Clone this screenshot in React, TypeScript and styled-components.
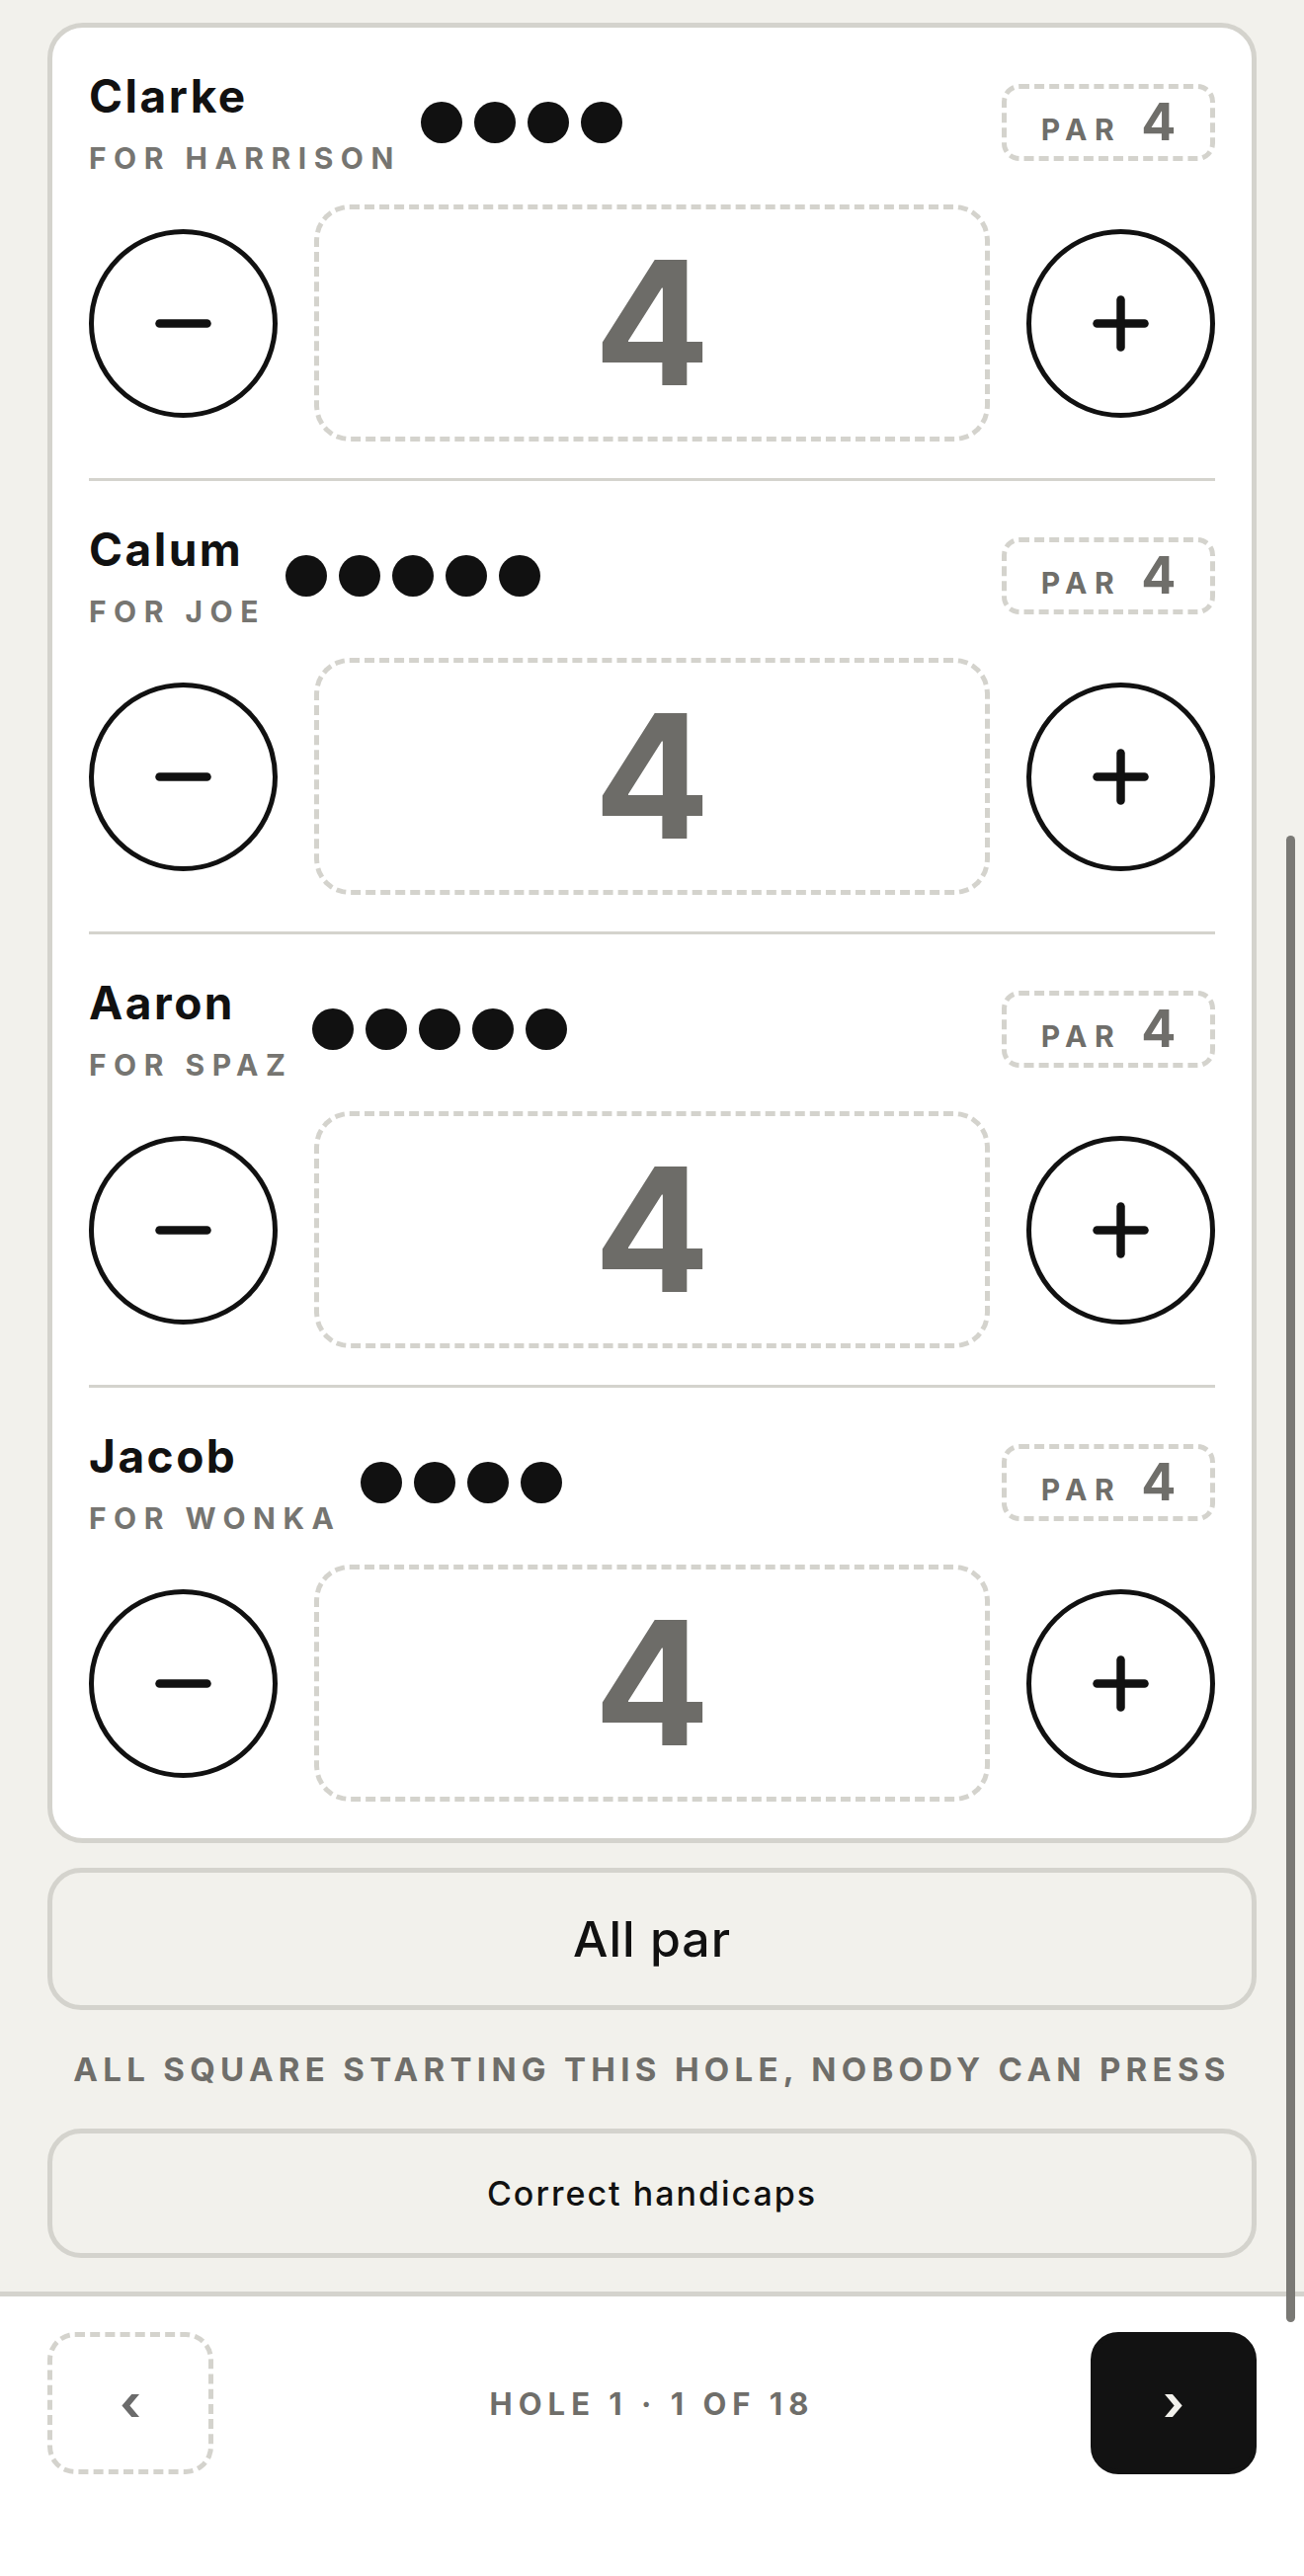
import React from "react";
import styled, { createGlobalStyle } from "styled-components";

const GlobalStyle = createGlobalStyle`
  html, body {
    margin: 0;
    padding: 0;
    background: #f2f1ec;
  }
  body {
    font-family: Inter, "Liberation Sans", sans-serif;
    -webkit-font-smoothing: antialiased;
  }
  * { box-sizing: border-box; }
`;

const Page = styled.div`
  position: relative;
  width: 1320px;
  min-height: 2608px;
  display: flex;
  flex-direction: column;
  background: #f2f1ec;
  overflow: hidden;
`;

const Main = styled.main`
  padding: 23px 48px 34px;
  display: flex;
  flex-direction: column;
`;

const Card = styled.section`
  background: #ffffff;
  border: 5px solid #d4d3cd;
  border-radius: 36px;
  padding: 0 37px;
`;

const Player = styled.div`
  display: flex;
  flex-direction: column;
  gap: 29px;
  padding: 42px 0 37px;
  border-bottom: 3px solid #d4d3cd;
  &:last-child {
    border-bottom: none;
  }
`;

const Header = styled.div`
  display: flex;
  align-items: center;
  justify-content: space-between;
`;

const Identity = styled.div`
  display: flex;
  align-items: center;
  gap: 20px;
`;

const NameBlock = styled.div`
  display: flex;
  flex-direction: column;
  gap: 18px;
`;

const Name = styled.div`
  font-size: 46px;
  line-height: 54px;
  font-weight: 700;
  color: #111111;
  letter-spacing: 2.5px;
`;

const ForLabel = styled.div`
  font-size: 30px;
  line-height: 36px;
  font-weight: 700;
  letter-spacing: 7.5px;
  color: #767571;
  text-transform: uppercase;
`;

const Dots = styled.div`
  display: flex;
  gap: 12px;
`;

const Dot = styled.span`
  width: 42px;
  height: 42px;
  border-radius: 50%;
  background: #111111;
`;

const ParBadge = styled.div`
  width: 216px;
  height: 78px;
  border: 5px dashed #d4d3cd;
  border-radius: 18px;
  line-height: 68px;
  text-align: center;
  white-space: nowrap;
  color: #6f6e6a;
  font-weight: 700;
`;

const ParLabel = styled.span`
  font-size: 30px;
  letter-spacing: 7.5px;
  margin-right: 20px;
`;

const ParValue = styled.span`
  font-size: 52px;
`;

const Controls = styled.div`
  display: flex;
  align-items: center;
  gap: 37px;
`;

const RoundButton = styled.button`
  flex: none;
  width: 191px;
  height: 191px;
  border-radius: 50%;
  border: 5px solid #111111;
  background: #ffffff;
  padding: 0;
  display: flex;
  align-items: center;
  justify-content: center;
`;

const ScoreBox = styled.div`
  flex: 1;
  height: 240px;
  border: 5px dashed #d4d3cd;
  border-radius: 36px;
  display: flex;
  align-items: center;
  justify-content: center;
  font-size: 174px;
  line-height: 1;
  font-weight: 700;
  color: #6d6c68;
`;

const WideButton = styled.button<{ $size: "lg" | "md" }>`
  width: 100%;
  height: ${(p) => (p.$size === "lg" ? 144 : 131)}px;
  border: 5px solid #d4d3cd;
  border-radius: 34px;
  background: transparent;
  font-family: inherit;
  font-weight: 500;
  font-size: ${(p) => (p.$size === "lg" ? 50 : 34)}px;
  letter-spacing: ${(p) => (p.$size === "lg" ? 1 : 2)}px;
  color: #111111;
  padding: 0;
`;

const AllParButton = styled(WideButton)`
  margin-top: 25px;
`;

const Status = styled.p`
  margin: 40px 0;
  text-align: center;
  font-size: 33px;
  line-height: 40px;
  font-weight: 700;
  letter-spacing: 5.3px;
  color: #6f6e6a;
`;

const Nav = styled.nav`
  margin-top: auto;
  background: #ffffff;
  border-top: 5px solid #d4d3cd;
  padding: 36px 48px 103px;
  display: flex;
  align-items: center;
  justify-content: space-between;
`;

const NavButton = styled.button<{ $primary?: boolean }>`
  width: 168px;
  height: 144px;
  border-radius: 28px;
  border: 5px ${(p) => (p.$primary ? "solid #121212" : "dashed #d4d3cd")};
  background: ${(p) => (p.$primary ? "#121212" : "transparent")};
  color: ${(p) => (p.$primary ? "#f2f1ec" : "#6b6b6b")};
  font-family: inherit;
  font-size: 50px;
  font-weight: 700;
  line-height: 1;
  padding: 0;
  display: flex;
  align-items: center;
  justify-content: center;
`;

const HoleLabel = styled.div`
  font-size: 31px;
  font-weight: 700;
  letter-spacing: 6px;
  color: #6f6e6a;
`;

const ScrollThumb = styled.div`
  position: absolute;
  right: 9px;
  top: 846px;
  width: 9px;
  height: 1505px;
  border-radius: 5px;
  background: #7a7975;
`;

const MinusIcon = () => (
  <svg width="57" height="57" viewBox="0 0 57 57" aria-hidden="true">
    <line x1="4.5" y1="28.5" x2="52.5" y2="28.5" stroke="#111" strokeWidth="8.5" strokeLinecap="round" />
  </svg>
);

const PlusIcon = () => (
  <svg width="57" height="57" viewBox="0 0 57 57" aria-hidden="true">
    <line x1="4.5" y1="28.5" x2="52.5" y2="28.5" stroke="#111" strokeWidth="8.5" strokeLinecap="round" />
    <line x1="28.5" y1="4.5" x2="28.5" y2="52.5" stroke="#111" strokeWidth="8.5" strokeLinecap="round" />
  </svg>
);

type PlayerData = { name: string; partner: string; dots: number; score: number; par: number };

const players: PlayerData[] = [
  { name: "Clarke", partner: "for Harrison", dots: 4, score: 4, par: 4 },
  { name: "Calum", partner: "for Joe", dots: 5, score: 4, par: 4 },
  { name: "Aaron", partner: "for Spaz", dots: 5, score: 4, par: 4 },
  { name: "Jacob", partner: "for Wonka", dots: 4, score: 4, par: 4 },
];

export default function App() {
  return (
    <Page>
      <GlobalStyle />
      <Main>
        <Card>
          {players.map((p) => (
            <Player key={p.name}>
              <Header>
                <Identity>
                  <NameBlock>
                    <Name>{p.name}</Name>
                    <ForLabel>{p.partner}</ForLabel>
                  </NameBlock>
                  <Dots>
                    {Array.from({ length: p.dots }).map((_, i) => (
                      <Dot key={i} />
                    ))}
                  </Dots>
                </Identity>
                <ParBadge>
                  <ParLabel>PAR</ParLabel>
                  <ParValue>{p.par}</ParValue>
                </ParBadge>
              </Header>
              <Controls>
                <RoundButton aria-label="decrease">
                  <MinusIcon />
                </RoundButton>
                <ScoreBox>{p.score}</ScoreBox>
                <RoundButton aria-label="increase">
                  <PlusIcon />
                </RoundButton>
              </Controls>
            </Player>
          ))}
        </Card>
        <AllParButton $size="lg">All par</AllParButton>
        <Status>ALL SQUARE STARTING THIS HOLE, NOBODY CAN PRESS</Status>
        <WideButton $size="md">Correct handicaps</WideButton>
      </Main>
      <Nav>
        <NavButton aria-label="previous">‹</NavButton>
        <HoleLabel>HOLE 1 · 1 OF 18</HoleLabel>
        <NavButton $primary aria-label="next">›</NavButton>
      </Nav>
      <ScrollThumb />
    </Page>
  );
}
